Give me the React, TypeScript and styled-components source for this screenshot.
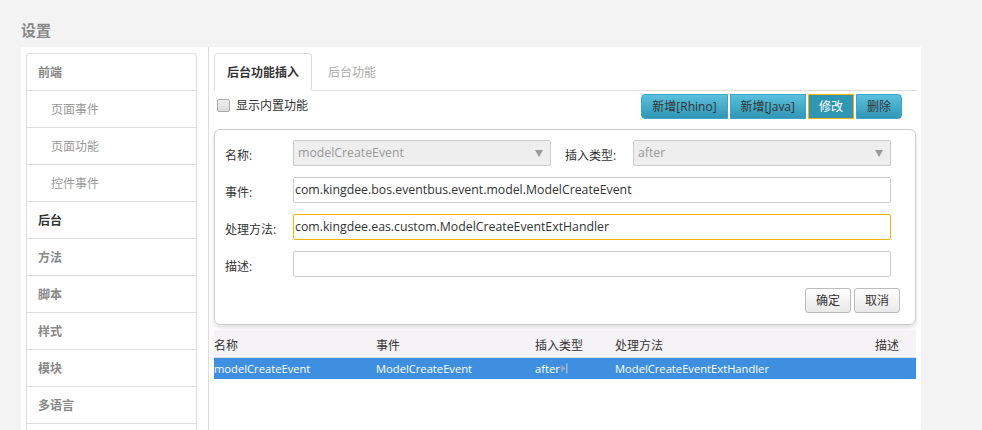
import React from 'react'
import styled, { createGlobalStyle, css } from 'styled-components'

const GlobalStyle = createGlobalStyle`
  html, body {
    margin: 0;
    padding: 0;
    background: #f3f3f3;
    font-family: 'Open Sans', 'Noto Sans CJK SC', sans-serif;
    font-size: 12px;
    color: #333;
  }
`

const menu = [
  { label: '前端', level: 0 },
  { label: '页面事件', level: 1 },
  { label: '页面功能', level: 1 },
  { label: '控件事件', level: 1 },
  { label: '后台', level: 0, active: true },
  { label: '方法', level: 0 },
  { label: '脚本', level: 0 },
  { label: '样式', level: 0 },
  { label: '模块', level: 0 },
  { label: '多语言', level: 0 },
  { label: '', level: 0 },
]

const columns = ['名称', '事件', '插入类型', '处理方法', '描述']

export default function App() {
  return (
    <>
      <GlobalStyle />
      <Page>
        <Title>设置</Title>
        <Panel>
          <SideColumn>
            <Menu>
              {menu.map((m, i) => (
                <MenuItem key={i} $level={m.level} $active={m.active}>
                  {m.label}
                </MenuItem>
              ))}
            </Menu>
          </SideColumn>
          <Main>
            <Tabs>
              <Tab $active>后台功能插入</Tab>
              <Tab>后台功能</Tab>
            </Tabs>
            <Toolbar>
              <CheckLabel>
                <CheckBox />
                <span>显示内置功能</span>
              </CheckLabel>
              <BtnGroup>
                <InfoBtn $first>新增[Rhino]</InfoBtn>
                <InfoBtn>新增[Java]</InfoBtn>
                <InfoBtn $active>修改</InfoBtn>
                <InfoBtn $last>删除</InfoBtn>
              </BtnGroup>
            </Toolbar>
            <FormCard>
              <FormRow>
                <Label>名称:</Label>
                <Select $w={258}>
                  modelCreateEvent
                  <Caret />
                </Select>
                <Label $inline>插入类型:</Label>
                <Select $grow>
                  after
                  <Caret />
                </Select>
              </FormRow>
              <FormRow>
                <Label>事件:</Label>
                <Input>com.kingdee.bos.eventbus.event.model.ModelCreateEvent</Input>
              </FormRow>
              <FormRow>
                <Label>处理方法:</Label>
                <Input $focus>com.kingdee.eas.custom.ModelCreateEventExtHandler</Input>
              </FormRow>
              <FormRow>
                <Label>描述:</Label>
                <Input />
              </FormRow>
              <FormActions>
                <PlainBtn>确定</PlainBtn>
                <PlainBtn>取消</PlainBtn>
              </FormActions>
            </FormCard>
            <Table>
              <HeadRow>
                {columns.map(c => (
                  <Cell key={c}>{c}</Cell>
                ))}
              </HeadRow>
              <BodyRow $selected>
                <Cell>modelCreateEvent</Cell>
                <Cell>ModelCreateEvent</Cell>
                <Cell>
                  after
                  <Grip>
                    <svg width="7" height="11" viewBox="0 0 7 11">
                      <path d="M0 1.5 L4.5 5.5 L0 9.5 Z" fill="#8fa9c6" />
                      <rect x="5" y="0.5" width="1.5" height="10" fill="#a4b9cf" />
                    </svg>
                  </Grip>
                </Cell>
                <Cell>ModelCreateEventExtHandler</Cell>
                <Cell />
              </BodyRow>
            </Table>
          </Main>
        </Panel>
      </Page>
    </>
  )
}

const Page = styled.div`
  height: 430px;
  overflow: hidden;
`
const Title = styled.div`
  height: 47px;
  line-height: 60px;
  padding-left: 21px;
  font-size: 15px;
  font-weight: bold;
  color: #888;
  box-sizing: border-box;
`
const Panel = styled.div`
  margin-left: 21px;
  width: 900px;
  height: 383px;
  background: #fff;
  display: flex;
`
const SideColumn = styled.div`
  width: 188px;
  border-right: 1px solid #ddd;
  padding: 6px 0 0 5px;
  box-sizing: border-box;
`
const Menu = styled.div`
  width: 171px;
  border: 1px solid #ddd;
  border-bottom: none;
  border-radius: 4px 4px 0 0;
  box-sizing: border-box;
`
const MenuItem = styled.div<{ $level: number; $active?: boolean }>`
  height: 37px;
  line-height: 37px;
  border-bottom: 1px solid #ddd;
  box-sizing: border-box;
  padding-left: ${p => (p.$level ? 24 : 11)}px;
  font-size: 12px;
  ${p =>
    p.$level
      ? css`
          color: #999;
        `
      : css`
          font-weight: bold;
          color: ${p.$active ? '#333' : '#888'};
        `}
`
const Main = styled.div`
  flex: 1;
  padding: 6px 4px 0 5px;
  display: flex;
  flex-direction: column;
`
const Tabs = styled.div`
  display: flex;
  height: 38px;
  border-bottom: 1px solid #ddd;
  box-sizing: border-box;
`
const Tab = styled.div<{ $active?: boolean }>`
  height: 38px;
  line-height: 37px;
  padding: 0 12px;
  box-sizing: border-box;
  font-size: 12px;
  border: 1px solid transparent;
  border-radius: 4px 4px 0 0;
  color: #aaa;
  ${p =>
    p.$active &&
    css`
      color: #333;
      font-weight: bold;
      border-color: #ddd;
      border-bottom-color: #fff;
      background: #fff;
      margin-right: 3px;
    `}
`
const Toolbar = styled.div`
  display: flex;
  justify-content: space-between;
  align-items: flex-start;
  padding: 3px 15px 0 3px;
  height: 35px;
  box-sizing: border-box;
`
const CheckLabel = styled.div`
  display: flex;
  align-items: center;
  gap: 6px;
  font-size: 12px;
  color: #333;
  height: 22px;
`
const CheckBox = styled.span`
  width: 11px;
  height: 11px;
  border: 1px solid #aaa;
  border-radius: 2px;
  background: linear-gradient(#eee, #ddd);
`
const BtnGroup = styled.div`
  display: flex;
  gap: 2px;
`
const InfoBtn = styled.div<{ $first?: boolean; $last?: boolean; $active?: boolean }>`
  height: 25px;
  line-height: 23px;
  padding: 0 10px;
  box-sizing: border-box;
  font-size: 12px;
  color: #333;
  background: linear-gradient(#5bc0de, #2f96b4);
  border: 1px solid #3fa3c4;
  border-radius: ${p => (p.$first ? '4px 0 0 4px' : p.$last ? '0 4px 4px 0' : '0')};
  ${p =>
    p.$active &&
    css`
      background: #2f96b4;
      border-color: #f5b400;
      color: #fff;
    `}
`
const FormCard = styled.div`
  margin-top: 3px;
  width: 702px;
  border: 1px solid #ccc;
  border-radius: 6px;
  box-shadow: 0 3px 5px rgba(0, 0, 0, 0.12);
  padding: 10px 24px 11px 10px;
  box-sizing: border-box;
`
const FormRow = styled.div`
  display: flex;
  align-items: center;
  height: 26px;
  margin-bottom: 11px;
`
const Label = styled.div<{ $inline?: boolean }>`
  width: 68px;
  margin-left: ${p => (p.$inline ? 14 : 0)}px;
  font-size: 12px;
  color: #333;
  padding-top: 3px;
`
const fieldBase = css`
  height: 26px;
  box-sizing: border-box;
  border: 1px solid #ccc;
  border-radius: 2px;
  padding: 0 0 0 1px;
  line-height: 24px;
  font-size: 12.3px;
  white-space: nowrap;
  overflow: hidden;
`
const Select = styled.div<{ $w?: number; $grow?: boolean }>`
  ${fieldBase}
  position: relative;
  background: #eee;
  color: #999;
  padding-left: 4px;
  ${p => (p.$grow ? 'flex: 1;' : `width: ${p.$w}px;`)}
`
const Caret = styled.span`
  position: absolute;
  right: 7px;
  top: 9px;
  width: 0;
  height: 0;
  border-left: 4px solid transparent;
  border-right: 4px solid transparent;
  border-top: 7px solid #999;
`
const Input = styled.div<{ $focus?: boolean }>`
  ${fieldBase}
  flex: 1;
  background: #fff;
  color: #333;
  ${p =>
    p.$focus &&
    css`
      border-color: #f5b400;
    `}
`
const FormActions = styled.div`
  display: flex;
  justify-content: flex-end;
  gap: 3px;
  margin-right: -9px;
`
const PlainBtn = styled.div`
  height: 25px;
  line-height: 23px;
  width: 46px;
  text-align: center;
  box-sizing: border-box;
  border: 1px solid #bbb;
  border-radius: 3px;
  background: linear-gradient(#fff, #e8e8e8);
  font-size: 12px;
  color: #333;
`
const Table = styled.div`
  margin-top: 5px;
  width: 702px;
`
const rowGrid = css`
  display: grid;
  grid-template-columns: 162px 159px 80px 1fr 41px;
  align-items: center;
`
const HeadRow = styled.div`
  ${rowGrid}
  height: 28px;
  background: #f6f3f6;
  border-bottom: 1px solid #ddd;
  box-sizing: border-box;
  font-size: 12px;
  color: #333;
  padding-top: 2px;
`
const BodyRow = styled.div<{ $selected?: boolean }>`
  ${rowGrid}
  height: 21px;
  font-size: 11.2px;
  background: ${p => (p.$selected ? '#3e8fdf' : '#fff')};
  color: ${p => (p.$selected ? '#fff' : '#333')};
`
const Cell = styled.div`
  white-space: nowrap;
  display: flex;
  align-items: center;
`
const Grip = styled.span`
  display: inline-flex;
  margin-left: 1px;
`
